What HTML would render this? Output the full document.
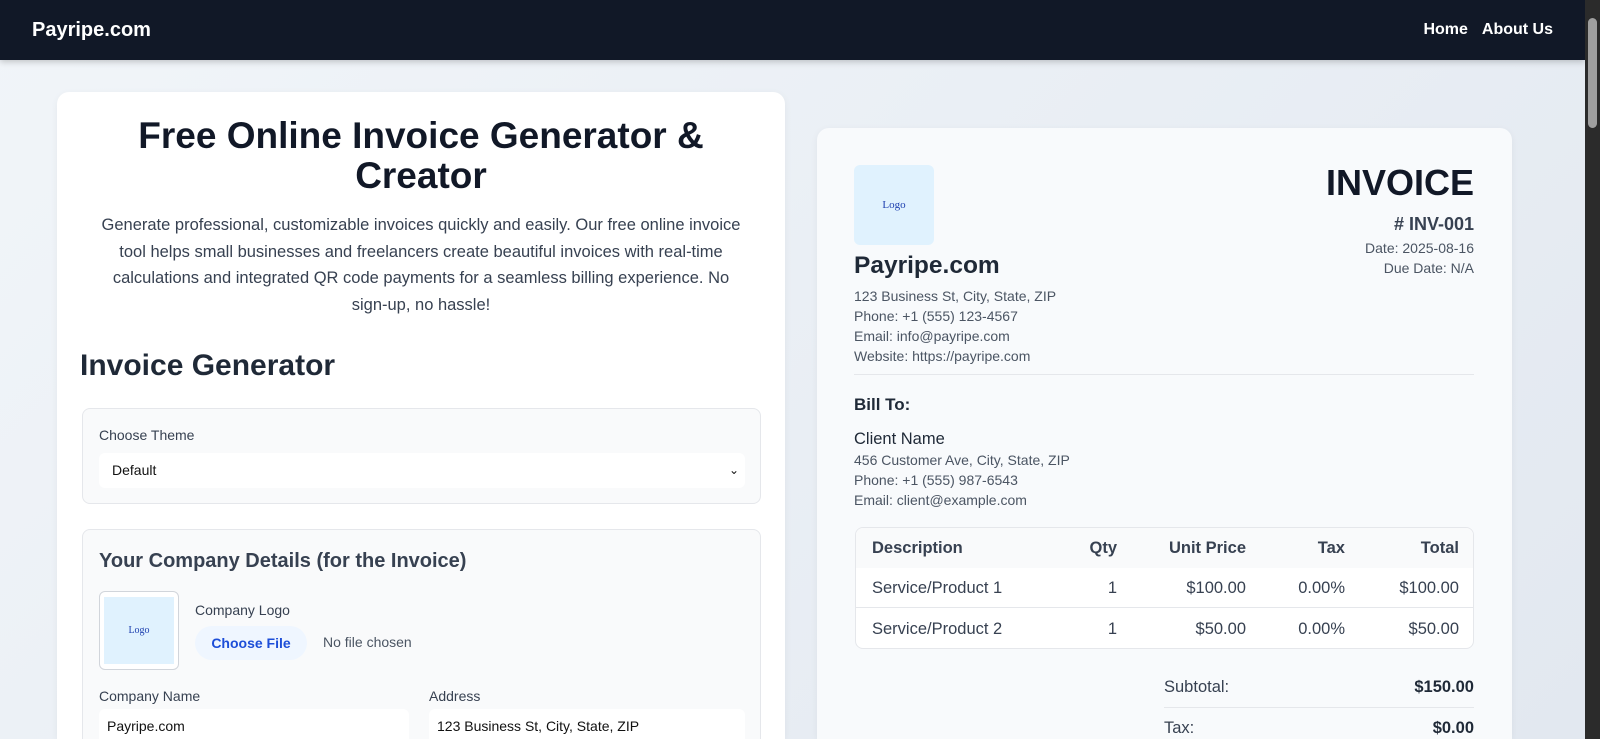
<!DOCTYPE html>
<html><head><meta charset="utf-8"><style>
*{box-sizing:border-box;margin:0;padding:0}
html,body{width:1600px;height:739px;overflow:hidden}
body{font-family:"Liberation Sans",Arial,sans-serif;background:linear-gradient(135deg,#f1f5f9,#e2e8f0);color:#1f2937;position:relative}
.hdr{position:absolute;left:0;top:0;width:1585px;height:60px;background:#111827;box-shadow:0 2px 6px rgba(0,0,0,.2)}
.hdr .logo{position:absolute;left:32px;top:19px;color:#fff;font-weight:bold;font-size:20px}
.hdr .nav{position:absolute;right:32px;top:21px;color:#fff;font-weight:bold;font-size:16px}
.hdr .nav span{margin-left:14px}
.sb{position:absolute;left:1585px;top:0;width:15px;height:739px;background:#2b2b2b}
.sb i{position:absolute;left:3px;top:18px;width:9px;height:110px;background:#9f9f9f;border-radius:5px}
.lc{position:absolute;left:57px;top:92px;width:728px;height:647px;background:#fff;border-radius:12px 12px 0 0;box-shadow:0 2px 8px rgba(0,0,0,.05);overflow:hidden}
.abs{position:absolute}
h1{position:absolute;left:0;width:728px;top:116px;text-align:center;font-size:37px;line-height:40px;color:#111827}
.p{position:absolute;left:29px;width:670px;top:120px;text-align:center;font-size:16.5px;line-height:26.5px;color:#374151}
.box{position:absolute;background:#f9fafb;border:1px solid #e5e7eb;border-radius:8px}
.lbl{position:absolute;font-size:14px;color:#374151}
.inp{position:absolute;background:#fff;border-radius:6px;font-size:15px;color:#111;padding-left:13px;line-height:35px;height:35px}
.rc{position:absolute;left:817px;top:128px;width:695px;height:611px;background:#f8fafc;border-radius:12px 12px 0 0;box-shadow:0 2px 8px rgba(0,0,0,.05);overflow:hidden}
.t{position:absolute;font-size:14px;color:#4b5563;line-height:20px}
.tb{position:absolute;left:38px;top:399px;width:619px;height:122px;border:1px solid #e5e7eb;border-radius:8px;background:#fff;overflow:hidden}
.row{position:absolute;left:0;width:619px;height:40px;font-size:16.5px;color:#374151;line-height:40px}
.row span{position:absolute}
</style></head><body>
<div class="hdr"><div class="logo">Payripe.com</div><div class="nav"><span>Home</span><span>About Us</span></div></div>
<div class="sb"><i></i></div>

<div class="lc">
<h1 style="top:24px">Free Online Invoice Generator &amp;<br>Creator</h1>
<div class="p">Generate professional, customizable invoices quickly and easily. Our free online invoice tool helps small businesses and freelancers create beautiful invoices with real-time calculations and integrated QR code payments for a seamless billing experience. No sign&#8209;up, no hassle!</div>
<div class="abs" style="left:23px;top:257px;font-size:30px;font-weight:bold;color:#1f2937">Invoice Generator</div>
<div class="box" style="left:25px;top:316px;width:679px;height:96px">
 <div class="lbl" style="left:16px;top:18px">Choose Theme</div>
 <div class="inp" style="left:16px;top:44px;width:646px;font-size:14px">Default<span style="position:absolute;right:6px;top:0;font-size:12px">&#8964;</span></div>
</div>
<div class="box" style="left:25px;top:437px;width:679px;height:320px">
 <div class="abs" style="left:16px;top:20px;font-size:20px;font-weight:600;color:#374151">Your Company Details (for the Invoice)</div>
 <div class="abs" style="left:16px;top:61px;width:80px;height:79px;border:1px solid #d1d5db;border-radius:6px;background:#fff"><div style="position:absolute;left:4px;top:5px;width:70px;height:67px;background:#e0f2fe;font-family:'Liberation Serif',serif;font-size:10px;color:#1e40af;text-align:center;line-height:67px">Logo</div></div>
 <div class="lbl" style="left:112px;top:72px">Company Logo</div>
 <div class="abs" style="left:112px;top:96px;width:112px;height:34px;border-radius:17px;background:#eff6ff;color:#1d4ed8;font-weight:bold;font-size:14px;text-align:center;line-height:34px">Choose File</div>
 <div class="abs" style="left:240px;top:104px;font-size:14px;color:#4b5563">No file chosen</div>
 <div class="lbl" style="left:16px;top:158px">Company Name</div>
 <div class="lbl" style="left:346px;top:158px">Address</div>
 <div class="inp" style="left:16px;top:179px;width:310px;font-size:14px;padding-left:8px">Payripe.com</div>
 <div class="inp" style="left:346px;top:179px;width:316px;font-size:14px;padding-left:8px">123 Business St, City, State, ZIP</div>
</div>
</div>

<div class="rc">
 <div class="abs" style="left:37px;top:37px;width:80px;height:80px;background:#e0f2fe;border-radius:6px;font-family:'Liberation Serif',serif;font-size:11px;color:#1e40af;text-align:center;line-height:80px">Logo</div>
 <div class="abs" style="right:38px;top:34px;font-size:36px;font-weight:bold;color:#111827">INVOICE</div>
 <div class="abs" style="right:38px;top:86px;font-size:18px;font-weight:bold;color:#374151">#&nbsp;INV-001</div>
 <div class="t" style="right:38px;top:110px;text-align:right;font-size:14px">Date: 2025-08-16<br>Due Date: N/A</div>
 <div class="abs" style="left:37px;top:124px;font-size:24.5px;font-weight:bold;color:#1f2937">Payripe.com</div>
 <div class="t" style="left:37px;top:158px;font-size:14px">123 Business St, City, State, ZIP<br>Phone: +1 (555) 123-4567<br>Email: info@payripe.com<br>Website: https://payripe.com</div>
 <div class="abs" style="left:37px;top:246px;width:620px;height:1px;background:#e5e7eb"></div>
 <div class="abs" style="left:37px;top:267px;font-size:17px;font-weight:600;color:#1f2937">Bill To:</div>
 <div class="abs" style="left:37px;top:302px;font-size:16.5px;font-weight:500;color:#1f2937">Client Name</div>
 <div class="t" style="left:37px;top:322px;font-size:14px">456 Customer Ave, City, State, ZIP<br>Phone: +1 (555) 987-6543<br>Email: client@example.com</div>
 <div class="tb">
  <div class="row" style="top:0;background:#f9fafb;font-weight:600"><span style="left:16px">Description</span><span style="right:358px">Qty</span><span style="right:229px">Unit Price</span><span style="right:130px">Tax</span><span style="right:16px">Total</span></div>
  <div class="row" style="top:40px;border-bottom:1px solid #e5e7eb"><span style="left:16px">Service/Product 1</span><span style="right:358px">1</span><span style="right:229px">$100.00</span><span style="right:130px">0.00%</span><span style="right:16px">$100.00</span></div>
  <div class="row" style="top:81px"><span style="left:16px">Service/Product 2</span><span style="right:358px">1</span><span style="right:229px">$50.00</span><span style="right:130px">0.00%</span><span style="right:16px">$50.00</span></div>
 </div>
 <div class="abs" style="left:347px;top:550px;font-size:16.5px;color:#374151">Subtotal:</div>
 <div class="abs" style="right:38px;top:550px;font-size:16.5px;font-weight:bold;color:#1f2937">$150.00</div>
 <div class="abs" style="left:347px;top:579px;width:310px;height:1px;background:#e5e7eb"></div>
 <div class="abs" style="left:347px;top:591px;font-size:16.5px;color:#374151">Tax:</div>
 <div class="abs" style="right:38px;top:591px;font-size:16.5px;font-weight:bold;color:#1f2937">$0.00</div>
</div>
</body></html>
